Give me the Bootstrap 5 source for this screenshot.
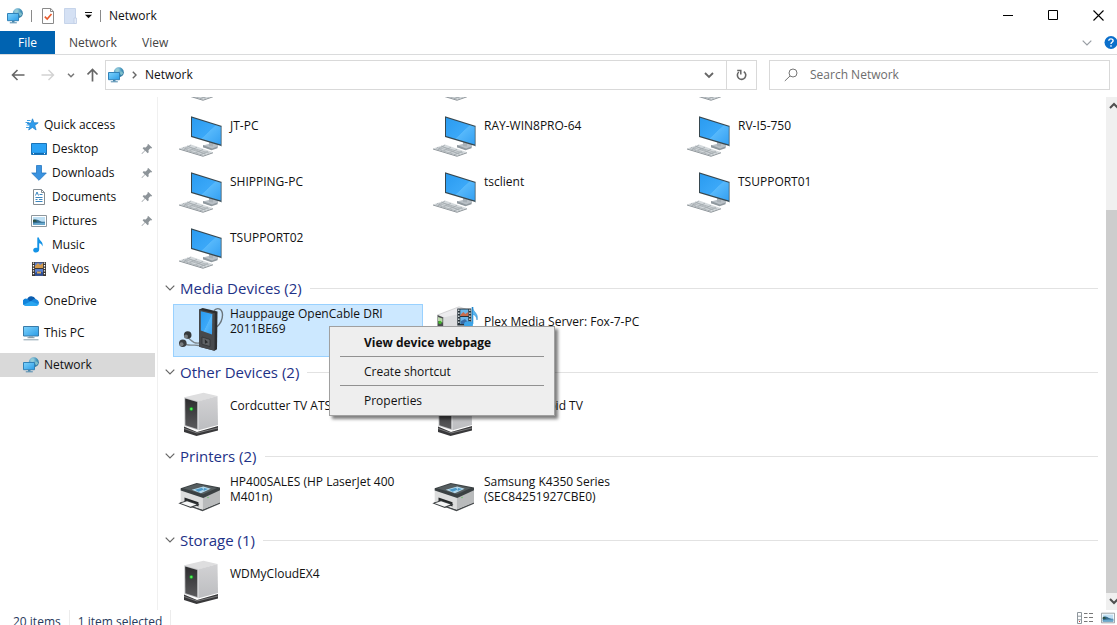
<!DOCTYPE html>
<html lang="en">
<head>
<meta charset="utf-8">
<meta name="viewport" content="width=device-width, initial-scale=1">
<title>Network</title>
<link href="https://cdn.jsdelivr.net/npm/bootstrap@5.3.0/dist/css/bootstrap.min.css" rel="stylesheet">
<style>
  body { font-family: "Open Sans", "Noto Sans", sans-serif; font-size: 12px; line-height: 15px; color: #111; background: #fff; }
  svg { display: block; flex: none; }
  button, input { font: inherit; color: inherit; }
  button { background: none; border: 0; padding: 0; }
  .i16 { width: 16px; height: 16px; }
  .i48 { width: 48px; height: 48px; }

  .titlebar { height: 31px; padding-left: 7px; gap: 8px; }
  .tick { width: 1px; height: 12px; background: #8a8a8a; }
  .win-btn { width: 45px; height: 31px; display: flex; align-items: center; justify-content: center; }
  .win-btns { margin-right: -4px; }

  .ribbon { height: 24px; border-bottom: 1px solid #dadbdc; color: #444; }
  .ribbon a { color: inherit; text-decoration: none; height: 23px; line-height: 24px; }
  .ribbon .file-tab { background: #0063b1; color: #fff; width: 55px; text-align: center; }
  .ribbon .net-tab { margin-left: 14px; width: 73px; }

  .addressbar { height: 42px; padding: 5px 7px 7px 11px; }
  .nav-arrows { width: 94px; }
  .crumbs { flex: 2 1 0; border: 1px solid #d9d9d9; margin-right: 12px; }
  .crumbs .path { padding-left: 2px; padding-bottom: 1px; }
  .crumbs .refresh { width: 30px; border-left: 1px solid #d9d9d9; }
  .search { flex: 1 1 0; border: 1px solid #d9d9d9; padding-left: 14px; padding-bottom: 1px; gap: 12px; }
  .search input { border: 0; outline: 0; min-width: 0; background: none; }
  .search input::placeholder { color: #6d6d6d; opacity: 1; }

  .sidebar { width: 158px; padding: 16px 2px 0 0; border-right: 1px solid #f0f0f0; flex: none; }
  .sidebar a { height: 24px; padding-left: 23px; gap: 5px; color: inherit; text-decoration: none; }
  .sidebar a span { padding-bottom: 2px; }
  .sidebar a.child { padding-left: 31px; }
  .sidebar a.root { margin-top: 8px; }
  .sidebar a.here { background: #d9d9d9; }
  .sidebar .pin { width: 12px; height: 12px; margin-left: auto; margin-right: 2px; }

  .files { padding: 0 8px 0 7px; min-width: 0; }
  .scrolled { margin-top: -45px; }
  .tiles { display: grid; grid-template-columns: repeat(3, 250px); gap: 3px 4px; padding-left: 8px; }
  .tile { height: 53px; padding: 1px 4px; gap: 4px; text-align: left; border: 1px solid transparent; position: relative; display: flex; width: 100%; }
  .tile .caption-text { height: 30px; width: 172px; display: flex; align-items: center; }
  .tile.chosen { background: #cce8ff; border-color: #99d1ff; }
  .tile-cell { position: relative; }
  .group-head { height: 31px; padding-bottom: 2px; gap: 5px; font-size: 15px; line-height: 20px; color: #1e3287; font-weight: 400; margin: 0; }
  .group-head::after { content: ""; flex: 1; height: 1px; background: #e2e2e2; margin-left: 3px; margin-top: 2px; }

  .ctx { position: absolute; left: 156px; top: 22px; width: 226px; background: #eee; border: 1px solid #a0a0a0; box-shadow: 3px 3px 3px rgba(0,0,0,.5); z-index: 5; padding: 1px 10px; }
  .ctx button { display: block; width: 100%; text-align: left; height: 28px; line-height: 27px; padding-left: 24px; color: #111; }
  .ctx hr { margin: 0; border-top: 1px solid #919191; opacity: 1; }

  .scrollbar { width: 11px; background: #f0f0f0; flex: none; overflow: hidden; }
  .scrollbar .step { height: 17px; padding-left: 3px; display: flex; align-items: center; }
  .scrollbar .thumb { background: #cdcdcd; height: 80%; }

  .statusbar { height: 15px; line-height: 24px; padding-left: 13px; padding-right: 2px; color: #26395c; overflow: hidden; flex: none; }
  .statusbar .cell { padding-right: 8px; margin-right: 8px; border-right: 1px solid #ececec; height: 24px; }
</style>
</head>
<body>
<svg width="0" height="0" class="position-absolute" aria-hidden="true">
  <defs>
    <linearGradient id="gScreen" x1="0" y1="0" x2="1" y2="1"><stop offset="0" stop-color="#2a9bf0"/><stop offset=".55" stop-color="#3ba8f8"/><stop offset=".56" stop-color="#56b8fb"/><stop offset="1" stop-color="#34a0f2"/></linearGradient>
    <linearGradient id="gSmall" x1="0" y1="0" x2="1" y2="1"><stop offset="0" stop-color="#7fd3fc"/><stop offset="1" stop-color="#2b9ce6"/></linearGradient>
    <linearGradient id="gSide" x1="0" y1="0" x2="0" y2="1"><stop offset="0" stop-color="#d2d2d4"/><stop offset="1" stop-color="#bcbdc0"/></linearGradient>
    <linearGradient id="gFront" x1="0" y1="0" x2="0" y2="1"><stop offset="0" stop-color="#2c2c2e"/><stop offset="1" stop-color="#5a5a5c"/></linearGradient>
    <radialGradient id="gGlobe" cx=".35" cy=".3" r=".8"><stop offset="0" stop-color="#b5dcec"/><stop offset=".5" stop-color="#4d9cc0"/><stop offset="1" stop-color="#1c6594"/></radialGradient>
  </defs>
  <symbol id="net" viewBox="0 0 16 16">
    <circle cx="10.8" cy="5.2" r="5" fill="url(#gGlobe)"/>
    <path d="M8 2.2l2.4-.7 1 1.5-1.6 1.6-2-.4zM12.3 4.2l2.2.6.6 1.8-1.6 1.8-1.4-1.4z" fill="#8fcbd0" opacity=".8"/>
    <path d="M.5 5.5h11v7.2H.5z" fill="url(#gSmall)" stroke="#3182b8"/>
    <path d="M5 13h2.5v1.4H5z" fill="#4a88ad"/><path d="M2.8 14.8h7" stroke="#4a88ad"/>
  </symbol>
  <symbol id="pc" viewBox="0 0 48 48">
    <path d="M25 35.5l11-3 4 2.2v2.6l-7 2-8-2z" fill="#b9c0c6"/><path d="M25 35l9 3.4 5.5-1.8v1.6l-6 2-8.5-3z" fill="#8f989e"/>
    <path d="M31 31l4 1.2v4.3l-4-.6z" fill="#a9b1b7"/>
    <path d="M13 6.2L44 16v20.2L13 27z" fill="#37474f"/>
    <path d="M14 7.7l28.8 9.1V34.5L14 26z" fill="url(#gScreen)"/>
    <path d="M43 16l1 .3v19.9l-1-.3z" fill="#91a0a8"/>
    <path d="M1 38.4l12-4 22 7.9-10 3.4z" fill="#d4d9dc"/><path d="M1 38.4l24 7.3 10-3.4v1l-10 3.5L1 39.4z" fill="#8d9499"/>
    <path d="M4 38.7l21 6.5M7 37.6l21 6.5M10 36.6l21 6.5M5 37.2l5 3M9 36l18 8M13 35l-7 4.500M19 37.200l-8 4M25 39.300l-8 4M30 41.200l-8 3.500" stroke="#a2a9ae" stroke-width=".7" fill="none"/>
  </symbol>
  <symbol id="server" viewBox="0 0 48 48">
    <path d="M6 36.500l13 5.500 21-6v4.500l-21.500 5.500L6 42z" fill="#38383a"/>
    <path d="M6 38.500l13 4.500 21-5" stroke="#8b8b8d" stroke-width=".8" fill="none"/>
    <path d="M6.300 7.300L25.500 2.700 39.500 6 20.500 11.500z" fill="#dededf"/>
    <path d="M20.500 11.300L39.500 6 40 35l-19.500 5.200z" fill="url(#gSide)"/>
    <path d="M6.300 7.300l14.200 4v28.900L6.500 36z" fill="#c6c7c9"/>
    <path d="M7.200 8.500l12 3.500v27L7.400 35.300z" fill="url(#gFront)"/>
    <circle cx="13.300" cy="19" r="2" fill="#1b8f2b"/><circle cx="13.300" cy="19" r="1.200" fill="#52ee54"/>
  </symbol>
  <symbol id="printer" viewBox="0 0 48 48">
    <path d="M2.500 28l22 7.500L42 28v1.800l-17.500 7.400-22-8z" fill="#45494b"/>
    <path d="M2.700 15l22 8v12.500l-22-7.500z" fill="#dcdddd"/>
    <path d="M24.700 23L42 15v13.500l-17.300 7z" fill="#b9bbbc"/>
    <path d="M2.700 14.300l16-5.300L42 13.500v2.800L25.200 24 2.700 16.500z" fill="#3b4143"/>
    <path d="M5 14.300l14-4.300 20 4-14 6.300z" fill="#565e60"/>
    <path d="M13.700 15.800l11.600-3.300 7.400 2.300-9.800 4.500z" fill="#b4d9ec"/><path d="M17 15.700l7-2 1.500 2-5 2zM26 14l4 1-4.500 2z" fill="#4f9cca"/>
    <path d="M6.500 23.500l14 4.700v4.300l-14-5z" fill="#26292a"/>
    <path d="M.3 29.300l8.700-3 12.500 4.200-8.700 3.500z" fill="#3a3e40"/><path d="M2.800 29.200l6.200-2 9.500 3.300-6 2.200z" fill="#f5f6f6"/>
    <circle cx="30" cy="23.500" r=".8" fill="#6fbf6f"/>
  </symbol>
  <symbol id="player" viewBox="0 0 48 48">
    <path d="M36 4.500C40 .8 44.500 3 44.500 9c0 5-2.500 9-5.500 11.700" fill="none" stroke="#6b757c" stroke-width="1.400"/>
    <path d="M9 31c4 2 5 7 12 6M5 37c5 4 10 1 16 2.500" fill="none" stroke="#7c868c" stroke-width="1.300"/>
    <path d="M21 3.500L24.700 2l14.800 3.500-.5 37.700-2.500 1.500-15.400-4z" fill="#2c2e30"/>
    <path d="M21 3.500l15.800 3.700-.3 37.500-15.400-4z" fill="#47494c"/>
    <path d="M22.800 5.300L34.300 8l-.3 20.600-11.200-4z" fill="url(#gScreen)"/>
    <path d="M24 31l8 2.500v7L24 38.200z" fill="#5f6265" stroke="#2d2f30" stroke-width=".7"/><path d="M26.800 33.200l3.200 3-3 1.500z" fill="#2a2c2d"/>
    <circle cx="9.700" cy="29" r="3.800" fill="#35383a"/><circle cx="8" cy="30.500" r="2" fill="#777c7f"/>
    <circle cx="4.800" cy="37.200" r="3.800" fill="#3b3e40"/><circle cx="3.500" cy="38.200" r="2" fill="#777c7f"/>
  </symbol>
  <symbol id="mediaserver" viewBox="0 0 48 48">
    <path d="M5.500 9L27 .8l13 4.500L14 13z" fill="#ececee" stroke="#bdbdc0" stroke-width=".6"/>
    <path d="M5.500 9l6 2.500V45l-6-3z" fill="#4a4d4f"/><path d="M11.500 11.500L40 5v33l-28.500 7z" fill="#dcdddf"/>
    <path d="M6 11l4.500 1.500v4L6 15z" fill="#b9d8ab"/><circle cx="8" cy="16.500" r="1.700" fill="#46b52f"/>
    <path d="M25.300 2.500h14v17h-14z" fill="#27333a"/><path d="M28.300 3.500h8v6.500h-8zM28.300 11h8v7h-8z" fill="#6cb6e8"/>
    <path d="M28.300 9l3-3 2 2 3-2v4h-8z" fill="#c96c4c"/><path d="M29 15l4-2 3 3v2h-7z" fill="#3a6ea8"/>
    <path d="M26.800 3.500v15M37.900 3.500v15" stroke="#e8edf0" stroke-width="1.300" stroke-dasharray="1.500 1.500"/>
    <path d="M40.500 1v17" stroke="#2b96dd" stroke-width="1.600"/><path d="M40.500 1c0 5 6.500 6 4.500 13-.5-4-2.500-5-4.500-6z" fill="#5ab5ee" stroke="#1d7fc4" stroke-width=".5"/><ellipse cx="36.500" cy="18.500" rx="4.500" ry="3.200" fill="#3da5e8"/>
  </symbol>
  <symbol id="pin" viewBox="0 0 12 12"><path d="M7.300.9l3.900 3.900-1 .7-.9-.2-1.800 1.900.2 2.100-1 .9-2.500-2.500L1 11l-.5-.4L3.700 7.400 1.600 5.200l.9-.9 2.200.2 1.900-1.900-.2-.9z" fill="#8d9499"/></symbol>
  <symbol id="chev" viewBox="0 0 10 6"><path d="M.7.7L5 5 9.300.7" fill="none" stroke="currentColor" stroke-width="1.200"/></symbol>
  <symbol id="picture" viewBox="0 0 16 16">
    <path d="M.5 2.500h15v11H.5z" fill="#fff" stroke="#8e979d"/><path d="M2 4h12v8H2z" fill="#bfe0f4"/><path d="M2 8c3-3 5-1 7 0 2 .8 3 1 5 .8V12H2z" fill="#356c8f"/><path d="M2 10.500c4-1 8-.5 12-1V12H2z" fill="#69a8cc"/><path d="M2 7c1.500-1 2.500-.5 4 1.500L2 9z" fill="#2c5142"/>
  </symbol>
</svg>

<div class="d-flex flex-column vh-100 overflow-hidden">
  <header>
    <div class="titlebar d-flex align-items-center">
      <svg class="i16"><use href="#net"/></svg>
      <span class="tick"></span>
      <button aria-label="Properties"><svg width="14" height="16" viewBox="-2 0 14 16"><path d="M.5.5h8.200l2.800 2.800v12.200H.5z" fill="#fff" stroke="#8a8a8a"/><path d="M8.500.5v3h3" fill="none" stroke="#8a8a8a"/><path d="M2.800 8.600l2.400 2.500 4.300-5" fill="none" stroke="#e8592b" stroke-width="1.600"/></svg></button>
      <button aria-label="New folder"><svg width="15" height="16" viewBox="-2 0 15 16"><path d="M.5.5h11v15H.5z" fill="#d5e1f4" stroke="#c6d4ea"/><path d="M10 10h2.500v5.500H10z" fill="#e4ecf8" stroke="#bfcde4" stroke-width=".8"/></svg></button>
      <button aria-label="Customize toolbar"><svg width="7" height="7" viewBox="0 0 7 7"><path d="M0 .5h7" stroke="#111"/><path d="M0 2.800h7L3.500 6.300z" fill="#111"/></svg></button>
      <span class="tick"></span>
      <span class="flex-grow-1">Network</span>
      <div class="win-btns d-flex">
        <button class="win-btn" aria-label="Minimize"><svg width="11" height="11" viewBox="0 0 11 11"><path d="M0 5.500h10" stroke="#000"/></svg></button>
        <button class="win-btn" aria-label="Maximize"><svg width="11" height="11" viewBox="0 0 11 11"><path d="M.5.500h9v9h-9z" fill="none" stroke="#000"/></svg></button>
        <button class="win-btn" aria-label="Close"><svg width="11" height="11" viewBox="0 0 11 11"><path d="M.5.500l10 10M10.500.500l-10 10" stroke="#000" stroke-width="1.100"/></svg></button>
      </div>
    </div>
    <nav class="ribbon d-flex overflow-hidden">
      <a href="#" class="file-tab">File</a>
      <a href="#" class="net-tab">Network</a>
      <a href="#" class="flex-grow-1">View</a>
      <button class="d-flex align-items-center me-2 pe-1 text-secondary" aria-label="Expand ribbon"><svg width="10" height="6" opacity=".7"><use href="#chev"/></svg></button>
      <button class="d-flex align-items-center" aria-label="Help"><svg width="13" height="14" viewBox="0 0 13 14"><circle cx="7" cy="6.500" r="6.500" fill="#0b6fcb"/><path d="M4.800 4.800c0-2.700 4.300-2.500 4.300-.1C9.100 6.200 7 6.200 7 7.900M7 9.200v1.600" stroke="#fff" stroke-width="1.400" fill="none"/></svg></button>
    </nav>
    <div class="addressbar d-flex">
      <div class="nav-arrows d-flex align-items-center flex-shrink-0">
        <button aria-label="Back"><svg width="14" height="12" viewBox="0 0 14 12"><path d="M13.500 6H1.500M6.500 1L1.500 6l5 5" fill="none" stroke="#666" stroke-width="1.600"/></svg></button>
        <button class="ms-3" aria-label="Forward"><svg width="14" height="12" viewBox="0 0 14 12"><path d="M.5 6h12M7.500 1l5 5-5 5" fill="none" stroke="#d2d2d2" stroke-width="1.400"/></svg></button>
        <button class="ms-2 ps-1" aria-label="Recent locations"><svg width="8" height="5" viewBox="0 0 8 5"><path d="M1 .8l3 3 3-3" fill="none" stroke="#777" stroke-width="1.500"/></svg></button>
        <button class="ms-2 ps-1" aria-label="Up"><svg width="12" height="14" viewBox="0 0 12 14"><path d="M5.500 13.500v-12M.5 6.500l5-5 5 5" fill="none" stroke="#666" stroke-width="1.700"/></svg></button>
      </div>
      <div class="crumbs d-flex align-items-stretch">
        <div class="path d-flex align-items-center flex-grow-1 gap-2">
          <svg class="i16"><use href="#net"/></svg>
          <svg width="5" height="8" viewBox="0 0 5 8"><path d="M.8.8L4 4 .8 7.200" fill="none" stroke="#666" stroke-width="1.400"/></svg>
          <span>Network</span>
        </div>
        <button class="px-2 me-1" aria-label="Previous locations"><svg width="10" height="7" viewBox="-1 0 10 7"><path d="M0 1l4 4 4-4" fill="none" stroke="#666" stroke-width="1.800"/></svg></button>
        <button class="refresh d-flex align-items-center justify-content-center" aria-label="Refresh"><svg width="11" height="12" viewBox="0 0 11 12"><path d="M7.800 2.600A4.200 4.200 0 1 1 2.800 3" fill="none" stroke="#666" stroke-width="1.600"/><path d="M1.200 1.500h3.600v4" fill="none" stroke="#666" stroke-width="1.500"/></svg></button>
      </div>
      <div class="search d-flex align-items-center">
        <svg width="14" height="14" viewBox="0 0 14 14"><circle cx="9" cy="5" r="4" fill="none" stroke="#777" stroke-width="1"/><path d="M6 8L.8 13" stroke="#777" stroke-width="1"/></svg>
        <input class="flex-grow-1 p-0" type="text" placeholder="Search Network" aria-label="Search Network">
      </div>
    </div>
  </header>

  <main class="d-flex flex-grow-1 overflow-hidden">
    <nav class="sidebar">
      <a href="#" class="d-flex align-items-center"><svg class="i16" viewBox="0 0 16 16"><path d="M9.500 1.800l1.500 4h4.200l-3.400 2.600 1.300 4.600-3.700-2.600-3.700 2.600L7 8.600 4 6h4z" fill="#2f9cec" stroke="#1b7fcb" stroke-width=".7"/><path d="M4 3.500h3.500M2.500 5.500H6M3.500 8h3M3 10.500h3" stroke="#3f9fe4" stroke-width="1"/></svg><span>Quick access</span></a>
      <a href="#" class="child d-flex align-items-center"><svg class="i16" viewBox="0 0 16 16"><path d="M.5 2.500h15v11H.5z" fill="#2aa2f5" stroke="#1b74b8"/><path d="M1 11.800h14v1.500H1z" fill="#116cb3"/><path d="M2 12.600h1M13 12.600h1" stroke="#fff"/></svg><span>Desktop</span><svg class="pin"><use href="#pin"/></svg></a>
      <a href="#" class="child d-flex align-items-center"><svg class="i16" viewBox="0 0 16 16"><path d="M5.500.500h5v7.500h4.800L8 15.300.7 8h4.800z" fill="#3a93e0" stroke="#2477c2" stroke-width=".8"/></svg><span>Downloads</span><svg class="pin"><use href="#pin"/></svg></a>
      <a href="#" class="child d-flex align-items-center"><svg class="i16" viewBox="0 0 16 16"><path d="M2.500.500h8l3 3v12h-11z" fill="#fff" stroke="#858d92"/><path d="M10.500.500v3h3" fill="none" stroke="#858d92"/><path d="M4.500 6.500L6 3l1.500 3.500M8.500 5.500h3M4.500 8.500h7M4.500 10.500h2M8 10.500h3.500M4.500 12.500h7" stroke="#3b86bf" fill="none"/></svg><span>Documents</span><svg class="pin"><use href="#pin"/></svg></a>
      <a href="#" class="child d-flex align-items-center"><svg class="i16"><use href="#picture"/></svg><span>Pictures</span><svg class="pin"><use href="#pin"/></svg></a>
      <a href="#" class="child d-flex align-items-center"><svg class="i16" viewBox="0 0 16 16"><path d="M6.300.500h1.600c.3 3.500 5 4 3.400 9-.4-2.300-1.700-3-3.100-3.200v6.200C8.200 16.500 2 16.300 2.200 13c.2-2.200 2.600-2.800 4.100-2z" fill="#1493e6"/></svg><span>Music</span></a>
      <a href="#" class="child d-flex align-items-center"><svg class="i16" viewBox="0 0 16 16"><path d="M1 1h14v14H1z" fill="#3a3632"/><path d="M4 1.500h8V7H4zM4 8h8v6.500H4z" fill="#5a7fd0"/><path d="M4 5l3-3 2 2 3-2v5H4z" fill="#d29a4e"/><path d="M4 12l4-2 4 1.500v3H4z" fill="#2c4d94"/><path d="M6 10.500h4v2H6z" fill="#d8a85c"/><path d="M2.500 1.500v13M13.500 1.500v13" stroke="#fff" stroke-width="1.300" stroke-dasharray="1.300 1.300"/></svg><span>Videos</span></a>
      <a href="#" class="root d-flex align-items-center"><svg class="i16" viewBox="0 0 16 16"><path d="M4 6.500a4.500 4.500 0 0 1 8.500-.500L13 9H4z" fill="#0b5cae"/><path d="M1.500 12.500A3.500 3.500 0 0 1 4.500 6l7 6.500z" fill="#1184dc"/><path d="M9 7.500A4 4 0 0 1 16 9.500c0 1.500-1 3-3 3.200L6 9z" fill="#1a8ae0"/><path d="M1 11.500L8 8.200l7.700 3c-.5 1-1.500 1.800-3 1.800H3.500C2.500 13 1.500 12.500 1 11.500z" fill="#2aa6f0"/></svg><span>OneDrive</span></a>
      <a href="#" class="root d-flex align-items-center"><svg class="i16" viewBox="0 0 16 16"><path d="M.5 1.500h15v9.500H.5z" fill="url(#gSmall)" stroke="#3a7ba8"/><path d="M6 11.500h4v1H6z" fill="#7f949f"/><path d="M4.500 12.700h7" stroke="#7f949f"/><path d="M.5 14.800h15" stroke="#8aa0ad"/></svg><span>This PC</span></a>
      <a href="#" class="root here d-flex align-items-center"><svg class="i16"><use href="#net"/></svg><span>Network</span></a>
    </nav>

    <div class="files flex-grow-1">
      <section class="scrolled">
        <div class="tiles">
          <button class="tile" aria-label="Computer"><svg class="i48"><use href="#pc"/></svg></button>
          <button class="tile" aria-label="Computer"><svg class="i48"><use href="#pc"/></svg></button>
          <button class="tile" aria-label="Computer"><svg class="i48"><use href="#pc"/></svg></button>
          <button class="tile"><svg class="i48"><use href="#pc"/></svg><span class="caption-text">JT-PC</span></button>
          <button class="tile"><svg class="i48"><use href="#pc"/></svg><span class="caption-text">RAY-WIN8PRO-64</span></button>
          <button class="tile"><svg class="i48"><use href="#pc"/></svg><span class="caption-text">RV-I5-750</span></button>
          <button class="tile"><svg class="i48"><use href="#pc"/></svg><span class="caption-text">SHIPPING-PC</span></button>
          <button class="tile"><svg class="i48"><use href="#pc"/></svg><span class="caption-text">tsclient</span></button>
          <button class="tile"><svg class="i48"><use href="#pc"/></svg><span class="caption-text">TSUPPORT01</span></button>
          <button class="tile"><svg class="i48"><use href="#pc"/></svg><span class="caption-text">TSUPPORT02</span></button>
        </div>
      </section>
      <section>
        <h2 class="group-head d-flex align-items-center"><svg width="10" height="6" color="#666"><use href="#chev"/></svg>Media Devices (2)</h2>
        <div class="tiles">
          <div class="tile-cell">
            <button class="tile chosen"><svg class="i48"><use href="#player"/></svg><span class="caption-text">Hauppauge OpenCable DRI 2011BE69</span></button>
            <div class="ctx" role="menu">
              <button role="menuitem" class="fw-bold">View device webpage</button>
              <hr>
              <button role="menuitem">Create shortcut</button>
              <hr>
              <button role="menuitem">Properties</button>
            </div>
          </div>
          <button class="tile"><svg class="i48"><use href="#mediaserver"/></svg><span class="caption-text">Plex Media Server: Fox-7-PC</span></button>
        </div>
      </section>
      <section>
        <h2 class="group-head d-flex align-items-center"><svg width="10" height="6" color="#666"><use href="#chev"/></svg>Other Devices (2)</h2>
        <div class="tiles">
          <button class="tile"><svg class="i48"><use href="#server"/></svg><span class="caption-text">Cordcutter TV ATSC</span></button>
          <button class="tile"><svg class="i48"><use href="#server"/></svg><span class="caption-text">Shield Android TV</span></button>
        </div>
      </section>
      <section>
        <h2 class="group-head d-flex align-items-center"><svg width="10" height="6" color="#666"><use href="#chev"/></svg>Printers (2)</h2>
        <div class="tiles">
          <button class="tile"><svg class="i48"><use href="#printer"/></svg><span class="caption-text">HP400SALES (HP LaserJet 400 M401n)</span></button>
          <button class="tile"><svg class="i48"><use href="#printer"/></svg><span class="caption-text">Samsung K4350 Series (SEC84251927CBE0)</span></button>
        </div>
      </section>
      <section>
        <h2 class="group-head d-flex align-items-center"><svg width="10" height="6" color="#666"><use href="#chev"/></svg>Storage (1)</h2>
        <div class="tiles">
          <button class="tile"><svg class="i48"><use href="#server"/></svg><span class="caption-text">WDMyCloudEX4</span></button>
        </div>
      </section>
    </div>

    <div class="scrollbar d-flex flex-column" aria-hidden="true">
      <div class="step"><svg width="10" height="7" viewBox="0 0 10 7"><path d="M1 6l4-4 4 4" fill="none" stroke="#505050" stroke-width="2"/></svg></div>
      <div class="flex-grow-1 d-flex flex-column justify-content-end"><div class="thumb"></div></div>
      <div class="step"><svg width="10" height="7" viewBox="0 0 10 7"><path d="M1 1l4 4 4-4" fill="none" stroke="#505050" stroke-width="2"/></svg></div>
    </div>
  </main>

  <footer class="statusbar d-flex">
    <span class="cell">20 items</span>
    <span class="cell me-auto">1 item selected</span>
    <button class="d-flex align-items-center" aria-label="Details view"><svg width="16" height="14" viewBox="0 0 16 14"><path d="M.5 1.500h4v11h-4zM.5 5.200h4M.5 8.800h4" fill="#fff" stroke="#8e979d"/><path d="M7 2.500h3.500M12 2.500h4M7 6.500h3.500M12 6.500h4M7 10.500h3.500M12 10.500h4" stroke="#777"/><path d="M2 10.500h1" stroke="#c33"/></svg></button>
    <button class="d-flex align-items-center ms-2" aria-label="Large icons view"><svg width="14" height="16"><use href="#picture"/></svg></button>
  </footer>
</div>
<script src="https://cdn.jsdelivr.net/npm/bootstrap@5.3.0/dist/js/bootstrap.bundle.min.js"></script>
</body>
</html>
